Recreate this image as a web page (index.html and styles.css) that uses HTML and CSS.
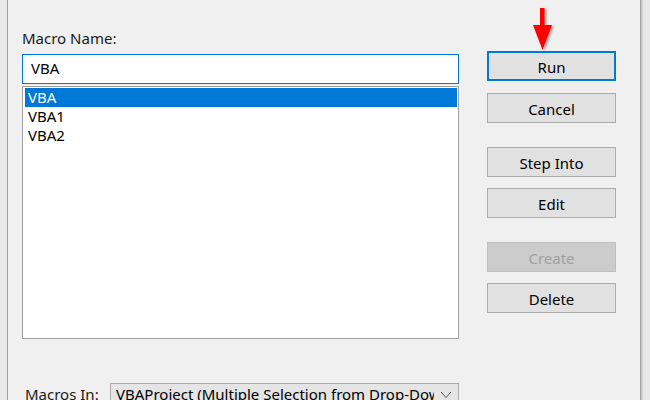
FILE: index.html
```html
<!DOCTYPE html>
<html>
<head>
<meta charset="utf-8">
<title>Macro</title>
<link rel="stylesheet" href="styles.css">
</head>
<body>
<div class="frame">
  <div class="dialog">
    <div class="left">
      <div class="lbl">Macro Name:</div>
      <div class="input">VBA</div>
      <div class="list">
        <div class="item sel">VBA</div>
        <div class="item">VBA1</div>
        <div class="item">VBA2</div>
      </div>
      <div class="macros-in">
        <span class="in-lbl">Macros In:</span>
        <div class="select">
          <span class="select-text">VBAProject (Multiple Selection from Drop-Down)</span>
          <svg class="chev" width="12" height="8" viewBox="0 0 12 8"><polyline points="1,1 6,6.5 11,1" fill="none" stroke="#555" stroke-width="1"/></svg>
        </div>
      </div>
    </div>
    <div class="right">
      <div class="btn default">Run</div>
      <div class="btn b-cancel">Cancel</div>
      <div class="btn b-step">Step Into</div>
      <div class="btn b-edit">Edit</div>
      <div class="btn disabled b-create">Create</div>
      <div class="btn b-delete">Delete</div>
    </div>
  </div>
  <svg class="arrow" width="30" height="52" viewBox="0 0 30 52">
    <rect x="10" y="4" width="4.5" height="18" fill="#ff0000"/>
    <polygon points="3,21 22,21 12.5,46" fill="#ff0000"/>
  </svg>
</div>
</body>
</html>
```
FILE: styles.css
```css
html, body {
  margin: 0;
  padding: 0;
  height: 400px;
  overflow: hidden;
  background: #e8e8e8;
  font-family: "Noto Sans", "Open Sans", sans-serif;
  font-size: 15px;
  color: #000;
}
.frame {
  position: relative;
  height: 400px;
  padding-left: 7px;
}
.dialog {
  width: 634px;
  height: 400px;
  background: #f0f0f0;
  border-left: 1px solid #a0a0a0;
  border-right: 1px solid #a6a6a6;
  box-shadow: 1px 0 0 #c4c4c4, 2px 0 0 #d8d8d8;
  padding-left: 14px;
  box-sizing: border-box;
  display: flex;
  align-items: flex-start;
  gap: 28px;
}
.left {
  width: 437px;
  flex-shrink: 0;
  padding-top: 28px;
}
.lbl {
  line-height: 20px;
  height: 20px;
  color: #1a1a1a;
}
.input {
  margin-top: 6px;
  height: 30px;
  box-sizing: border-box;
  border: 1px solid #0078d7;
  background: #fff;
  padding: 3px 8px 0;
  line-height: 20px;
}
.list {
  margin-top: 2px;
  height: 253px;
  box-sizing: border-box;
  border: 1px solid #a0a0a0;
  background: #fff;
  padding: 1px 1px 0 2px;
}
.item {
  height: 19px;
  line-height: 19px;
  padding-left: 3px;
}
.item.sel {
  background: #0078d7;
  color: #fff;
}
.macros-in {
  margin-top: 44px;
  display: flex;
  align-items: flex-start;
}
.in-lbl {
  width: 85px;
  flex-shrink: 0;
  padding-left: 3px;
  padding-top: 1px;
  line-height: 20px;
  color: #1a1a1a;
}
.select {
  width: 349px;
  height: 30px;
  box-sizing: border-box;
  border: 1px solid #acacac;
  background: #e5e5e5;
  display: flex;
  align-items: flex-start;
  padding: 0 6px 0 5px;
  line-height: 20px;
  overflow: hidden;
}
.select-text {
  width: 318px;
  white-space: nowrap;
  overflow: hidden;
}
.chev {
  margin-top: 7px;
  margin-left: 6px;
}
.right {
  width: 129px;
  flex-shrink: 0;
  padding-top: 51px;
  display: flex;
  flex-direction: column;
}
.btn {
  height: 30px;
  box-sizing: border-box;
  border: 1px solid #adadad;
  background: #e1e1e1;
  display: flex;
  align-items: center;
  justify-content: center;
  padding-top: 1px;
  line-height: 20px;
}
.btn.default {
  border: 2px solid #0078d7;
}
.b-cancel { margin-top: 12px; }
.b-step { margin-top: 24px; }
.b-edit { margin-top: 11px; }
.b-create { margin-top: 24px; }
.b-delete { margin-top: 11px; }
.btn.disabled {
  background: #cccccc;
  border-color: #bfbfbf;
  color: #a0a0a0;
}
.arrow {
  position: absolute;
  left: 530px;
  top: 4px;
  filter: drop-shadow(2px 1px 1px rgba(0,0,0,0.3));
}
```
